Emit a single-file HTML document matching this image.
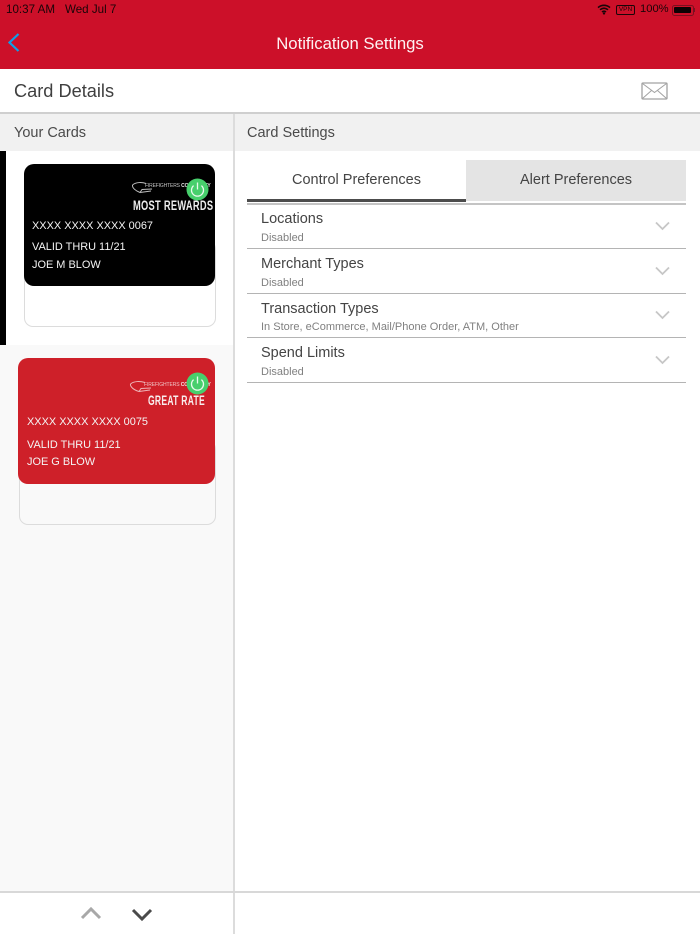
<!DOCTYPE html>
<html>
<head>
<meta charset="utf-8">
<style>
html,body{margin:0;padding:0;}
body{width:700px;height:934px;position:relative;overflow:hidden;background:#fff;font-family:"Liberation Sans",sans-serif;color:#3d3d3d;}
.a{position:absolute;}
.t{position:absolute;white-space:nowrap;line-height:1;}
.card-t{color:#f4f4f4;font-size:10.95px;}
.h{font-size:14.5px;color:#444;}
.s{font-size:11px;color:#808080;}
.sep{position:absolute;left:247px;width:439px;height:1px;background:#b4b4b4;}
</style>
</head>
<body>
<!-- header -->
<div class="a" style="left:0;top:0;width:700px;height:69px;background:#cc1029;"></div>
<div class="t" style="left:6px;top:4px;font-size:11.6px;color:#1a0508;">10:37 AM</div>
<div class="t" style="left:65px;top:4px;font-size:11.6px;color:#1a0508;">Wed Jul 7</div>
<svg class="a" style="left:597px;top:4px;" width="14" height="11" viewBox="0 0 14 11"><path d="M1 3.6C4.6 .6 9.4 .6 13 3.6M3 5.8C5.5 3.8 8.5 3.8 11 5.8M5 8C6.2 7 7.8 7 9 8" fill="none" stroke="#1a0508" stroke-width="1.6"/><circle cx="7" cy="9.4" r="1.2" fill="#1a0508"/></svg>
<div class="a" style="left:616px;top:5px;width:17px;height:8px;border:1px solid #1a0508;border-radius:2px;font-size:6.5px;line-height:8px;text-align:center;color:#1a0508;">VPN</div>
<div class="t" style="left:640px;top:4px;font-size:11.2px;color:#1a0508;">100%</div>
<div class="a" style="left:672px;top:5px;width:20px;height:9px;border:1px solid #7a1020;border-radius:2.5px;"></div>
<div class="a" style="left:674px;top:7px;width:17px;height:6px;background:#0c0204;border-radius:1px;"></div>
<div class="a" style="left:694px;top:8px;width:1px;height:4px;background:#7a1020;"></div>
<svg class="a" style="left:6px;top:32px;" width="16" height="22" viewBox="0 0 16 22"><path d="M12.5 2L3.5 10.5L12.5 19" fill="none" stroke="#0f9fe6" stroke-width="2.2"/></svg>
<div class="t" style="left:0;width:700px;text-align:center;top:36px;font-size:16.7px;color:#fdf2f3;">Notification Settings</div>

<!-- card details bar -->
<div class="t" style="left:14px;top:82px;font-size:18.2px;color:#3f3f3f;">Card Details</div>
<svg class="a" style="left:641px;top:82px;" width="27" height="18" viewBox="0 0 27 18"><rect x="1" y="1" width="25" height="16" rx="1" fill="none" stroke="#a2a2a2" stroke-width="1.3"/><path d="M1.5 1.5L13.5 10.5L25.5 1.5M1.5 16.5L10.5 8.5M25.5 16.5L16.5 8.5" fill="none" stroke="#a2a2a2" stroke-width="1"/></svg>
<div class="a" style="left:0;top:112px;width:700px;height:2px;background:#cfcfcf;"></div>

<!-- section headers -->
<div class="a" style="left:0;top:114px;width:700px;height:37px;background:#f1f1f1;"></div>
<div class="t h" style="left:14px;top:126px;color:#4a4a4a;">Your Cards</div>
<div class="t h" style="left:247px;top:126px;color:#4a4a4a;">Card Settings</div>

<!-- left column -->
<div class="a" style="left:0;top:151px;width:233px;height:740px;background:#f9f9f9;"></div>
<div class="a" style="left:6px;top:151px;width:227px;height:194px;background:#fff;"></div>
<div class="a" style="left:0;top:151px;width:6px;height:194px;background:#000;"></div>

<!-- vertical divider -->
<div class="a" style="left:233px;top:114px;width:2px;height:820px;background:#dcdcdc;"></div>

<!-- card 1 -->
<div class="a" style="left:24px;top:240px;width:190px;height:85px;border:1px solid #dcdcdc;border-radius:9px;background:#fff;"></div>
<div class="a" style="left:24px;top:164px;width:191px;height:122px;background:#000;border-radius:10px;"></div>
<svg class="a" style="left:131px;top:181px;" width="24" height="15" viewBox="0 0 24 15"><path d="M1.5 4C5 1 11 1 15 2.5M1.5 4C1 7 5 10 9 11.5L11 8.5L21 8M9 11.5L20 10" fill="none" stroke="#bdbdbd" stroke-width="1"/></svg>
<div class="t" style="left:145px;top:184px;font-size:5px;color:#c4c4c4;letter-spacing:-.15px;">FIREFIGHTERS <b style="color:#e8e8e8">COMMUNITY</b></div>
<div class="t" style="left:133px;top:199px;font-size:13.5px;font-weight:bold;color:#ededed;transform:scaleX(.69);transform-origin:0 0;letter-spacing:.4px;">MOST REWARDS</div>
<div class="t card-t" style="left:32px;top:221px;">XXXX XXXX XXXX 0067</div>
<div class="t card-t" style="left:32px;top:242px;">VALID THRU 11/21</div>
<div class="t card-t" style="left:32px;top:260px;">JOE M BLOW</div>
<svg class="a" style="left:186px;top:178px;" width="23" height="23" viewBox="0 0 23 23"><circle cx="11.5" cy="11.5" r="11" fill="#47cf6c"/><path d="M7.6 7.6A6 6 0 1 0 15.4 7.6" fill="none" stroke="#e9f9ed" stroke-width="1.3"/><path d="M11.5 4.5V11.5" stroke="#e9f9ed" stroke-width="1.3"/></svg>

<!-- card 2 -->
<div class="a" style="left:19px;top:440px;width:195px;height:83px;border:1px solid #dcdcdc;border-radius:9px;background:#f9f9f9;"></div>
<div class="a" style="left:18px;top:358px;width:197px;height:126px;background:#ce2029;border-radius:10px;"></div>
<svg class="a" style="left:129px;top:380px;" width="26" height="15" viewBox="0 0 26 15"><path d="M1.5 4C5 1 11 1 16 2.5M1.5 4C1 7 5 10 10 11.5L12 8.5L22 8M10 11.5L21 10" fill="none" stroke="#eeb4b7" stroke-width="1"/></svg>
<div class="t" style="left:144px;top:383px;font-size:5px;color:#f0c4c6;letter-spacing:-.1px;">FIREFIGHTERS <b style="color:#f8e4e4">COMMUNITY</b></div>
<div class="t" style="left:148px;top:394px;font-size:13.5px;font-weight:bold;color:#f8eded;transform:scaleX(.635);transform-origin:0 0;letter-spacing:.4px;">GREAT RATE</div>
<div class="t card-t" style="left:27px;top:417px;">XXXX XXXX XXXX 0075</div>
<div class="t card-t" style="left:27px;top:440px;">VALID THRU 11/21</div>
<div class="t card-t" style="left:27px;top:457px;">JOE G BLOW</div>
<svg class="a" style="left:186px;top:372px;" width="23" height="23" viewBox="0 0 23 23"><circle cx="11.5" cy="11.5" r="11" fill="#47cf6c"/><path d="M7.6 7.6A6 6 0 1 0 15.4 7.6" fill="none" stroke="#e9f9ed" stroke-width="1.3"/><path d="M11.5 4.5V11.5" stroke="#e9f9ed" stroke-width="1.3"/></svg>

<!-- tabs -->
<div class="a" style="left:466px;top:160px;width:220px;height:41px;background:#e4e4e4;"></div>
<div class="a" style="left:247px;top:199px;width:219px;height:3px;background:#4c4c4c;"></div>
<div class="t" style="left:247px;width:219px;text-align:center;top:173px;font-size:14.5px;color:#444;">Control Preferences</div>
<div class="t" style="left:466px;width:220px;text-align:center;top:173px;font-size:14.5px;color:#444;">Alert Preferences</div>
<div class="a" style="left:247px;top:203px;width:439px;height:2px;background:#c4c4c4;"></div>

<!-- rows -->
<div class="t h" style="left:261px;top:212px;">Locations</div>
<div class="t s" style="left:261px;top:233px;">Disabled</div>
<div class="sep" style="top:248px;"></div>
<div class="t h" style="left:261px;top:257px;">Merchant Types</div>
<div class="t s" style="left:261px;top:278px;">Disabled</div>
<div class="sep" style="top:293px;"></div>
<div class="t h" style="left:261px;top:302px;">Transaction Types</div>
<div class="t s" style="left:261px;top:322px;">In Store, eCommerce, Mail/Phone Order, ATM, Other</div>
<div class="sep" style="top:337px;"></div>
<div class="t h" style="left:261px;top:346px;">Spend Limits</div>
<div class="t s" style="left:261px;top:367px;">Disabled</div>
<div class="sep" style="top:382px;"></div>

<svg class="a" style="left:655px;top:221px;" width="15" height="10" viewBox="0 0 15 10"><path d="M1 1.5L7.5 8L14 1.5" fill="none" stroke="#c6c6c6" stroke-width="1.8"/></svg>
<svg class="a" style="left:655px;top:266px;" width="15" height="10" viewBox="0 0 15 10"><path d="M1 1.5L7.5 8L14 1.5" fill="none" stroke="#c6c6c6" stroke-width="1.8"/></svg>
<svg class="a" style="left:655px;top:310px;" width="15" height="10" viewBox="0 0 15 10"><path d="M1 1.5L7.5 8L14 1.5" fill="none" stroke="#c6c6c6" stroke-width="1.8"/></svg>
<svg class="a" style="left:655px;top:355px;" width="15" height="10" viewBox="0 0 15 10"><path d="M1 1.5L7.5 8L14 1.5" fill="none" stroke="#c6c6c6" stroke-width="1.8"/></svg>

<!-- footer -->
<div class="a" style="left:0;top:891px;width:700px;height:2px;background:#d8d8d8;"></div>
<div class="a" style="left:233px;top:893px;width:2px;height:41px;background:#dcdcdc;"></div>
<svg class="a" style="left:80px;top:906px;" width="22" height="14" viewBox="0 0 22 14"><path d="M2 12L11 3L20 12" fill="none" stroke="#a8a8a8" stroke-width="3"/></svg>
<svg class="a" style="left:131px;top:908px;" width="22" height="14" viewBox="0 0 22 14"><path d="M2 2L11 11L20 2" fill="none" stroke="#4a4a4a" stroke-width="3"/></svg>
</body>
</html>
